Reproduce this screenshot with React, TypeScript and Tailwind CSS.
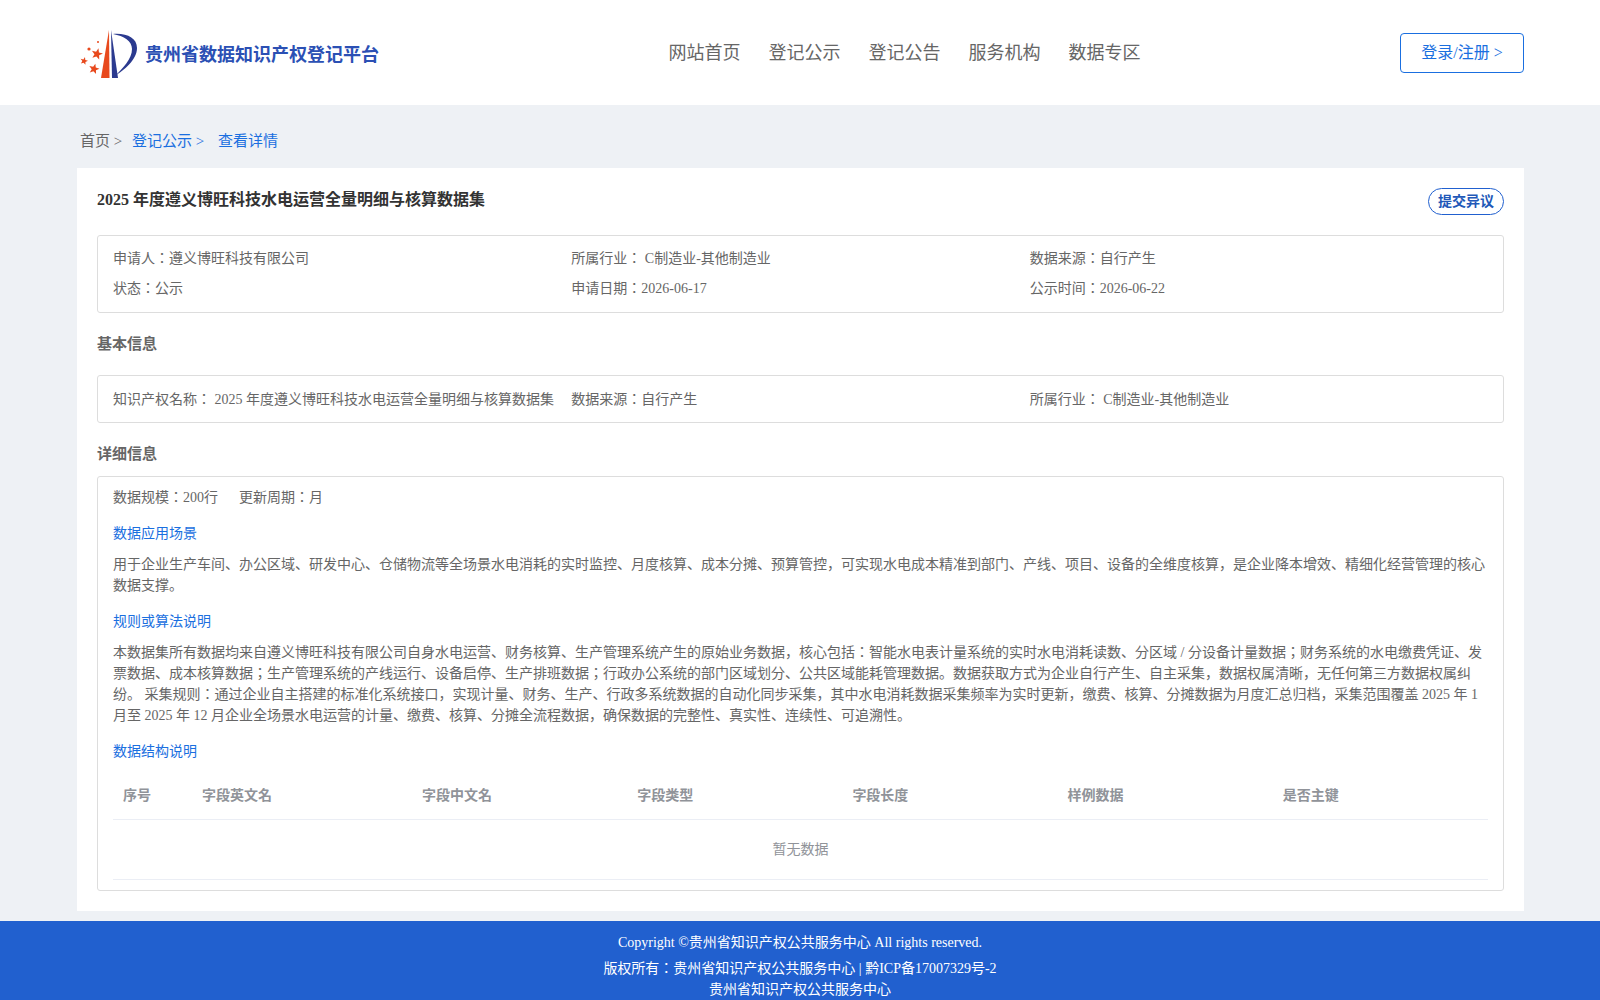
const nav = ["网站首页", "登记公示", "登记公告", "服务机构", "数据专区"];
const columns = ["序号", "字段英文名", "字段中文名", "字段类型", "字段长度", "样例数据", "是否主键"];

function Star({ x, y, r }: { x: number; y: number; r: number }) {
  const points = Array.from({ length: 10 }).map((_, i) => {
    const radius = i % 2 === 0 ? r : r * 0.42;
    const angle = (Math.PI / 5) * i - Math.PI / 2 + 0.25;
    return `${x + radius * Math.cos(angle)},${y + radius * Math.sin(angle)}`;
  });
  return <polygon points={points.join(" ")} fill="#e8491d" />;
}

function Logo() {
  return (
    <svg width="60" height="52" viewBox="0 0 60 52" className="shrink-0">
      <path d="M29 1 L29.5 49 L21 49 Z" fill="#e8491d" />
      <path d="M31 1 L38 49 L32 49 Z" fill="#2b3a8f" />
      <path d="M33 5 C47 4 57 9 57 19 C57 31 44 41 35 47 C43 39 52 30 52 20 C52 12 44 7 33 5 Z" fill="#2b3a8f" />
      <Star x={17} y={25} r={6} />
      <Star x={4} y={32} r={4} />
      <Star x={14} y={40} r={5.5} />
      <circle cx={9} cy={20} r={1.6} fill="#e8491d" />
      <circle cx={18} cy={13} r={1} fill="#e8491d" />
    </svg>
  );
}

function Info({ label, value }: { label: string; value: string }) {
  return (
    <div>
      {label}
      {value}
    </div>
  );
}

export default function App() {
  return (
    <div className="min-h-[1000px] bg-[#eef1f5] text-sm text-[#666] font-['Liberation_Serif','Noto_Sans_CJK_JP',serif]">
      <header className="h-[105px] bg-white">
        <div className="flex items-center justify-between h-full pl-20 pr-[76px]">
          <div className="flex items-center w-[299px] whitespace-nowrap pt-1">
            <Logo />
            <span className="ml-[5px] mt-px text-lg font-bold text-[#2b50b4]">贵州省数据知识产权登记平台</span>
          </div>
          <nav className="flex gap-7 text-lg text-[#666] ml-[30px]">
            {nav.map((item) => (
              <span key={item}>{item}</span>
            ))}
          </nav>
          <button className="w-[124px] h-10 rounded border border-[#1a6fe0] bg-white text-base text-[#1a6fe0]">
            登录/注册 &gt;
          </button>
        </div>
      </header>

      <main className="pl-[77px] pr-[76px]">
        <div className="flex h-[63px] items-center pl-[3px] pt-[10px] text-[15px]">
          <span className="w-[52px]">首页 &gt;</span>
          <span className="w-[86px] text-[#1a6fe0]">登记公示 &gt;</span>
          <span className="text-[#1a6fe0]">查看详情</span>
        </div>

        <div className="bg-white px-5 pt-5 pb-5">
          <div className="flex items-start justify-between h-[47px]">
            <h1 className="text-base font-bold text-[#333]">2025 年度遵义博旺科技水电运营全量明细与核算数据集</h1>
            <button className="w-[76px] h-[27px] rounded-[14px] border border-[#2160cf] text-sm font-bold text-[#2158b8]">
              提交异议
            </button>
          </div>

          <div className="grid grid-cols-3 content-start gap-y-[10px] h-[78px] px-[15px] pt-[13px] border border-[#ddd] rounded-[3px]">
            <Info label="申请人：" value="遵义博旺科技有限公司" />
            <Info label="所属行业： " value="C制造业-其他制造业" />
            <Info label="数据来源：" value="自行产生" />
            <Info label="状态：" value="公示" />
            <Info label="申请日期：" value="2026-06-17" />
            <Info label="公示时间：" value="2026-06-22" />
          </div>

          <h2 className="mt-[21px] mb-5 text-[15px] leading-[21px] font-bold">基本信息</h2>

          <div className="grid grid-cols-3 h-12 px-[15px] pt-px items-center border border-[#ddd] rounded-[3px]">
            <Info label="知识产权名称： " value="2025 年度遵义博旺科技水电运营全量明细与核算数据集" />
            <Info label="数据来源：" value="自行产生" />
            <Info label="所属行业： " value="C制造业-其他制造业" />
          </div>

          <h2 className="mt-[21px] mb-[11px] text-[15px] leading-[21px] font-bold">详细信息</h2>

          <div className="h-[415px] px-[15px] pt-[10px] border border-[#ddd] rounded-[3px] leading-[21px]">
            <div className="flex gap-[21px]">
              <span>数据规模：200行</span>
              <span>更新周期：月</span>
            </div>
            <div className="mt-[15px] text-[#1a6fe0]">数据应用场景</div>
            <p className="mt-[10px]">
              用于企业生产车间、办公区域、研发中心、仓储物流等全场景水电消耗的实时监控、月度核算、成本分摊、预算管控，可实现水电成本精准到部门、产线、项目、设备的全维度核算，是企业降本增效、精细化经营管理的核心数据支撑。
            </p>
            <div className="mt-[15px] text-[#1a6fe0]">规则或算法说明</div>
            <p className="mt-[10px]">
              本数据集所有数据均来自遵义博旺科技有限公司自身水电运营、财务核算、生产管理系统产生的原始业务数据，核心包括：智能水电表计量系统的实时水电消耗读数、分区域 / 分设备计量数据；财务系统的水电缴费凭证、发票数据、成本核算数据；生产管理系统的产线运行、设备启停、生产排班数据；行政办公系统的部门区域划分、公共区域能耗管理数据。数据获取方式为企业自行产生、自主采集，数据权属清晰，无任何第三方数据权属纠纷。 采集规则：通过企业自主搭建的标准化系统接口，实现计量、财务、生产、行政多系统数据的自动化同步采集，其中水电消耗数据采集频率为实时更新，缴费、核算、分摊数据为月度汇总归档，采集范围覆盖 2025 年 1 月至 2025 年 12 月企业全场景水电运营的计量、缴费、核算、分摊全流程数据，确保数据的完整性、真实性、连续性、可追溯性。
            </p>
            <div className="mt-[15px] text-[#1a6fe0]">数据结构说明</div>

            <table className="mt-[10px] w-full table-fixed">
              <colgroup>
                <col className="w-[79px]" />
                <col className="w-[220px]" />
              </colgroup>
              <thead>
                <tr className="h-[47px] border-b border-[#ebeef5]">
                  {columns.map((c) => (
                    <th key={c} className="px-[10px] text-left font-bold text-[#909399]">
                      {c}
                    </th>
                  ))}
                </tr>
              </thead>
              <tbody>
                <tr className="h-[60px] border-b border-[#ebeef5]">
                  <td colSpan={7} className="pt-px text-center text-[#909399]">
                    暂无数据
                  </td>
                </tr>
              </tbody>
            </table>
          </div>
        </div>
      </main>

      <footer className="mt-[10px] h-[90px] bg-[#2160cf] pt-[11px] text-center text-white leading-[21px]">
        <div>Copyright ©贵州省知识产权公共服务中心 All rights reserved.</div>
        <div className="mt-[5px]">版权所有：贵州省知识产权公共服务中心 | 黔ICP备17007329号-2</div>
        <div>贵州省知识产权公共服务中心</div>
      </footer>
    </div>
  );
}
